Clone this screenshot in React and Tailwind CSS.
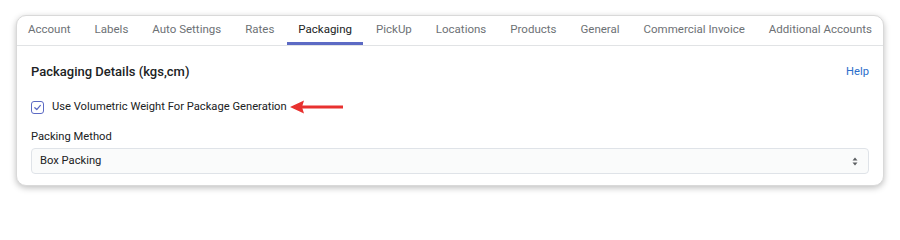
import React from "react";

const tabs = [
  "Account",
  "Labels",
  "Auto Settings",
  "Rates",
  "Packaging",
  "PickUp",
  "Locations",
  "Products",
  "General",
  "Commercial Invoice",
  "Additional Accounts",
];

function Tabs({ active }) {
  return (
    <div className="flex justify-between border-b border-[#e1e3e5]">
      {tabs.map((tab) => {
        const isActive = tab === active;
        return (
          <div
            key={tab}
            className={
              "h-[29px] px-[11px] pt-[2px] flex items-center whitespace-nowrap text-[11.5px] border-b-[3px] " +
              (isActive
                ? "border-[#5c6ac4] text-[#202223]"
                : "border-transparent text-[#6d7175]")
            }
          >
            {tab}
          </div>
        );
      })}
    </div>
  );
}

function Arrow() {
  return (
    <svg width="54" height="14" viewBox="0 0 54 14" className="ml-[3px]">
      <path d="M0 7 L14 0.5 L12 7 L14 13.5 Z" fill="#e8312f" />
      <rect x="11" y="5.5" width="42" height="3" fill="#e8312f" />
    </svg>
  );
}

export default function App() {
  return (
    <div
      className="w-[900px] h-[200px] bg-white pt-[15px] px-[16px]"
      style={{ fontFamily: "Roboto, 'Liberation Sans', sans-serif" }}
    >
      <div className="w-[868px] bg-white rounded-[10px] border border-[#d9d9d9] shadow-[0_2px_6px_rgba(0,0,0,0.25)] overflow-hidden">
        <Tabs active="Packaging" />

        <div className="px-[14px] pt-[18px] pb-[11px]">
          {/* Header */}
          <div className="flex items-center justify-between h-[16px]">
            <h2 className="text-[13px] font-medium text-[#202223]">
              Packaging Details (kgs,cm)
            </h2>
            <a className="text-[11.2px] text-[#2c6ecb]">Help</a>
          </div>

          {/* Checkbox */}
          <div className="flex items-center mt-[20px] h-[14px]">
            <div className="w-[13px] h-[13px] rounded-[3px] border border-[#5c6ac4] flex items-center justify-center">
              <svg width="9" height="9" viewBox="0 0 10 10">
                <path
                  d="M2 5.2 L4.2 7.3 L8.2 2.7"
                  fill="none"
                  stroke="#5c6ac4"
                  strokeWidth="1.4"
                  strokeLinecap="round"
                  strokeLinejoin="round"
                />
              </svg>
            </div>
            <span className="ml-[8px] text-[11.2px] text-[#202223] whitespace-nowrap">
              Use Volumetric Weight For Package Generation
            </span>
            <Arrow />
          </div>

          {/* Packing method */}
          <div className="mt-[15px] text-[11.2px] text-[#202223] h-[16px] leading-[16px]">
            Packing Method
          </div>
          <div className="mt-[3px] h-[26px] rounded-[4px] border border-[#dfe3e8] bg-[#fafbfb] flex items-center justify-between pl-[8px] pr-[10px]">
            <span className="text-[11.2px] text-[#202223]">Box Packing</span>
            <svg width="6" height="9" viewBox="0 0 6 9">
              <path d="M3 0.5 L5.5 3.5 H0.5 Z" fill="#5c5f62" />
              <path d="M3 8.5 L5.5 5.5 H0.5 Z" fill="#5c5f62" />
            </svg>
          </div>
        </div>
      </div>
    </div>
  );
}
